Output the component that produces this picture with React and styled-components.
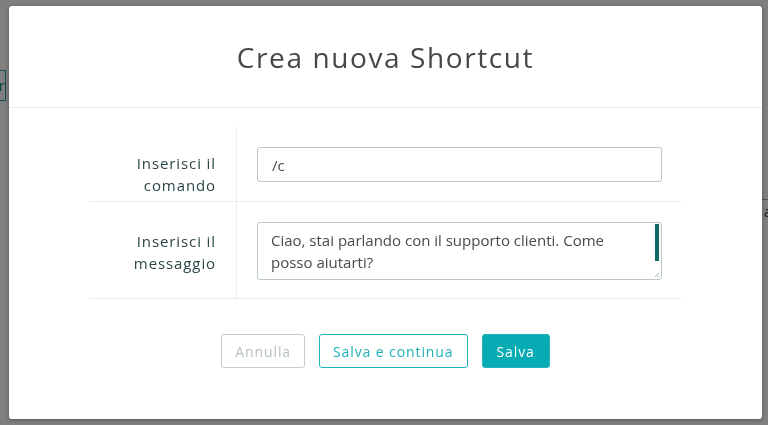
import React from 'react'
import styled, { createGlobalStyle } from 'styled-components'

const GlobalStyle = createGlobalStyle`
  html, body {
    margin: 0;
    padding: 0;
    width: 768px;
    height: 425px;
    overflow: hidden;
    font-family: "Open Sans", "Noto Sans", sans-serif;
    background: #ffffff;
  }
`

export default function App() {
  return (
    <>
      <GlobalStyle />
      <Page>
        <PageInput>r</PageInput>
        <PageRule />
        <PageLetter>a</PageLetter>
      </Page>
      <Backdrop>
        <Modal>
          <Header>
            <Title>Crea nuova Shortcut</Title>
          </Header>
          <Body>
            <Form>
              <Row>
                <Label $top={25}>Inserisci il<br />comando</Label>
                <Field $top={20} $bottom={19}>
                  <Input defaultValue="/c" />
                </Field>
              </Row>
              <Row>
                <Label $top={28}>Inserisci il<br />messaggio</Label>
                <Field $top={20} $bottom={18}>
                  <TextBox>
                    <TextArea
                      defaultValue="Ciao, stai parlando con il supporto clienti. Come posso aiutarti?"
                    />
                    <ScrollThumb />
                    <Grip width="6" height="6" viewBox="0 0 6 6">
                      <path d="M5 1 L1 5 M5 3.5 L3.5 5" stroke="#999" strokeWidth="0.8" />
                    </Grip>
                  </TextBox>
                </Field>
              </Row>
            </Form>
            <Actions>
              <Button $variant="ghost">Annulla</Button>
              <Button $variant="outline">Salva e continua</Button>
              <Button $variant="primary">Salva</Button>
            </Actions>
          </Body>
        </Modal>
      </Backdrop>
    </>
  )
}

const Page = styled.div`
  position: fixed;
  inset: 0;
  background: #fff;
`
const PageInput = styled.div`
  position: absolute;
  left: -100px;
  top: 70px;
  width: 106px;
  height: 31px;
  border: 1px solid #1f9ea0;
  box-sizing: border-box;
  color: #1b8f93;
  font-size: 15px;
  line-height: 29px;
  text-align: right;
`
const PageRule = styled.div`
  position: absolute;
  left: 700px;
  right: 0;
  top: 199px;
  border-top: 1px solid #9aa;
`
const PageLetter = styled.div`
  position: absolute;
  left: 764px;
  top: 202px;
  color: #333;
  font-size: 14px;
`
const Backdrop = styled.div`
  position: fixed;
  inset: 0;
  background: rgba(0, 0, 0, 0.5);
`
const Modal = styled.div`
  position: absolute;
  left: 9px;
  top: 6px;
  width: 753px;
  height: 413px;
  background: #fff;
  border-radius: 3px;
  box-shadow: 0 1px 4px rgba(0, 0, 0, 0.35);
  display: flex;
  flex-direction: column;
`
const Header = styled.div`
  height: 101px;
  border-bottom: 1px solid #ececec;
  display: flex;
  align-items: center;
  justify-content: center;
`
const Title = styled.h1`
  margin: 0;
  font-size: 28px;
  font-weight: 400;
  letter-spacing: 1.6px;
  color: #474747;
`
const Body = styled.div`
  padding-top: 19px;
  display: flex;
  flex-direction: column;
`
const Form = styled.div`
  margin-left: 80px;
  width: 592px;
`
const Row = styled.div`
  display: grid;
  grid-template-columns: 148px 1fr;
  border-bottom: 1px solid #ececec;
`
const Label = styled.div`
  padding: ${(p) => p.$top}px 20px 0 0;
  border-right: 1px solid #ececec;
  text-align: right;
  font-size: 15px;
  line-height: 22px;
  letter-spacing: 0.9px;
  color: #2c4646;
`
const Field = styled.div`
  padding: ${(p) => p.$top}px 19px ${(p) => p.$bottom}px 20px;
`
const Input = styled.input`
  display: block;
  width: 100%;
  box-sizing: border-box;
  height: 35px;
  padding: 0 14px;
  border: 1px solid #b9c7c7;
  border-radius: 3px;
  font-family: inherit;
  font-size: 15px;
  color: #4a4a4a;
  outline: none;
`
const TextBox = styled.div`
  position: relative;
  height: 58px;
  border: 1px solid #b9c7c7;
  border-radius: 3px;
  box-sizing: border-box;
`
const TextArea = styled.textarea`
  display: block;
  width: 100%;
  height: 100%;
  box-sizing: border-box;
  padding: 6px 14px 0 13px;
  border: none;
  background: transparent;
  resize: none;
  overflow: hidden;
  font-family: inherit;
  font-size: 15px;
  line-height: 22px;
  color: #4a4a4a;
  outline: none;
`
const ScrollThumb = styled.div`
  position: absolute;
  right: 2px;
  top: 1px;
  width: 4px;
  height: 37px;
  background: #0d6b64;
`
const Grip = styled.svg`
  position: absolute;
  right: 1px;
  bottom: 1px;
`
const Button = styled.button`
  height: 34px;
  padding: 0 ${(p) => (p.$variant === 'primary' ? 14 : 13)}px;
  border-radius: 3px;
  font-family: inherit;
  font-size: 14px;
  letter-spacing: 0.9px;
  cursor: pointer;
  box-sizing: border-box;
  border: 1px solid
    ${(p) => (p.$variant === 'ghost' ? '#c3cdcd' : '#22b2ba')};
  background: ${(p) => (p.$variant === 'primary' ? '#06abb3' : '#fff')};
  color: ${(p) =>
    p.$variant === 'primary' ? '#fff' : p.$variant === 'ghost' ? '#b5c1c1' : '#1fb0b8'};
`
const Actions = styled.div`
  display: flex;
  justify-content: center;
  gap: 14px;
  margin-top: 35px;
`
